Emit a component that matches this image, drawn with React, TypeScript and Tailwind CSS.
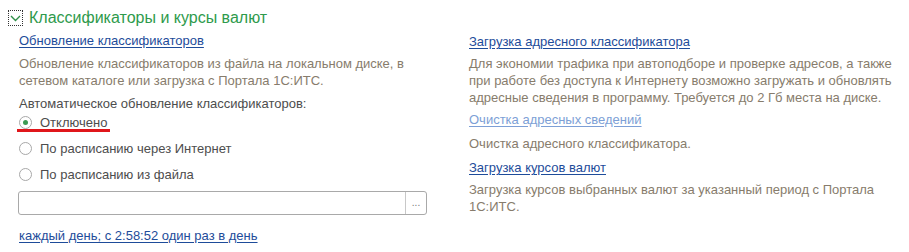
import React from "react";

const font = { fontFamily: '"Liberation Sans", Arial, sans-serif' };

function Radio({ checked, label, underline }: { checked?: boolean; label: string; underline?: boolean }) {
  return (
    <div className="relative flex h-[26px] items-center">
      <span className="flex h-[13px] w-[13px] items-center justify-center rounded-full border border-[#a8a8a8] bg-white">
        {checked && <span className="h-[5px] w-[5px] rounded-full bg-[#3c9a52]" />}
      </span>
      <span className="ml-[8px] text-[13px] leading-[17px] text-[#4d4d4d]">{label}</span>
      {underline && <span className="absolute left-[-2px] top-[20px] h-[3px] w-[93px] bg-[#e0161b]" />}
    </div>
  );
}

function Link({ children, light }: { children: React.ReactNode; light?: boolean }) {
  return (
    <a
      className={
        "block w-fit text-[13px] leading-[17px] underline underline-offset-[2px] " +
        (light ? "text-[#7d9fd6] decoration-[#7d9fd6]" : "text-[#1e4c9a] decoration-[#1e4c9a]")
      }
    >
      {children}
    </a>
  );
}

function Desc({ children }: { children: React.ReactNode }) {
  return <p className="text-[13px] leading-[17px] text-[#877c6c]">{children}</p>;
}

export default function App() {
  return (
    <div className="h-[252px] w-[909px] bg-white" style={font}>
      <div className="flex items-center pl-[8px] pt-[8px]">
        <span className="flex h-[16px] w-[15px] items-center justify-center border border-dotted border-[#333]">
          <svg width="11" height="7" viewBox="0 0 11 7">
            <path d="M1 1 L5.5 5.5 L10 1" fill="none" stroke="#2e8f48" strokeWidth="1.4" />
          </svg>
        </span>
        <span className="ml-[6px] text-[16px] leading-[20px] text-[#2e9a4c]">Классификаторы и курсы валют</span>
      </div>
      <div className="flex pt-[4px]">
        <div className="ml-[19px] w-[410px]">
          <Link>Обновление классификаторов</Link>
          <div className="mt-[6px]">
            <Desc>
              Обновление классификаторов из файла на локальном диске, в сетевом каталоге или загрузка с Портала 1С:ИТС.
            </Desc>
          </div>
          <p className="mt-[6px] text-[13px] leading-[17px] text-[#4d4d4d]">Автоматическое обновление классификаторов:</p>
          <div className="mt-[-3px]">
            <Radio checked label="Отключено" underline />
            <Radio label="По расписанию через Интернет" />
            <Radio label="По расписанию из файла" />
          </div>
          <div className="ml-[-1px] mt-[4px] flex h-[24px] w-[409px] rounded-[3px] border border-[#a9a9a9] bg-white">
            <div className="flex-1" />
            <div className="flex w-[21px] items-center justify-center border-l border-[#c8c8c8] text-[10px] leading-none text-[#777]">
              ...
            </div>
          </div>
          <div className="mt-[12px]">
            <Link>каждый день; с 2:58:52 один раз в день</Link>
          </div>
        </div>
        <div className="ml-[40px] w-[425px] pt-[1px]">
          <Link>Загрузка адресного классификатора</Link>
          <div className="mt-[5px]">
            <Desc>
              Для экономии трафика при автоподборе и проверке адресов, а также при работе без доступа к Интернету возможно загружать и обновлять адресные сведения в программу. Требуется до 2 Гб места на диске.
            </Desc>
          </div>
          <div className="mt-[5px]">
            <Link light>Очистка адресных сведений</Link>
          </div>
          <div className="mt-[7px]">
            <Desc>Очистка адресного классификатора.</Desc>
          </div>
          <div className="mt-[7px]">
            <Link>Загрузка курсов валют</Link>
          </div>
          <div className="mt-[5px]">
            <Desc>Загрузка курсов выбранных валют за указанный период с Портала 1С:ИТС.</Desc>
          </div>
        </div>
      </div>
    </div>
  );
}
